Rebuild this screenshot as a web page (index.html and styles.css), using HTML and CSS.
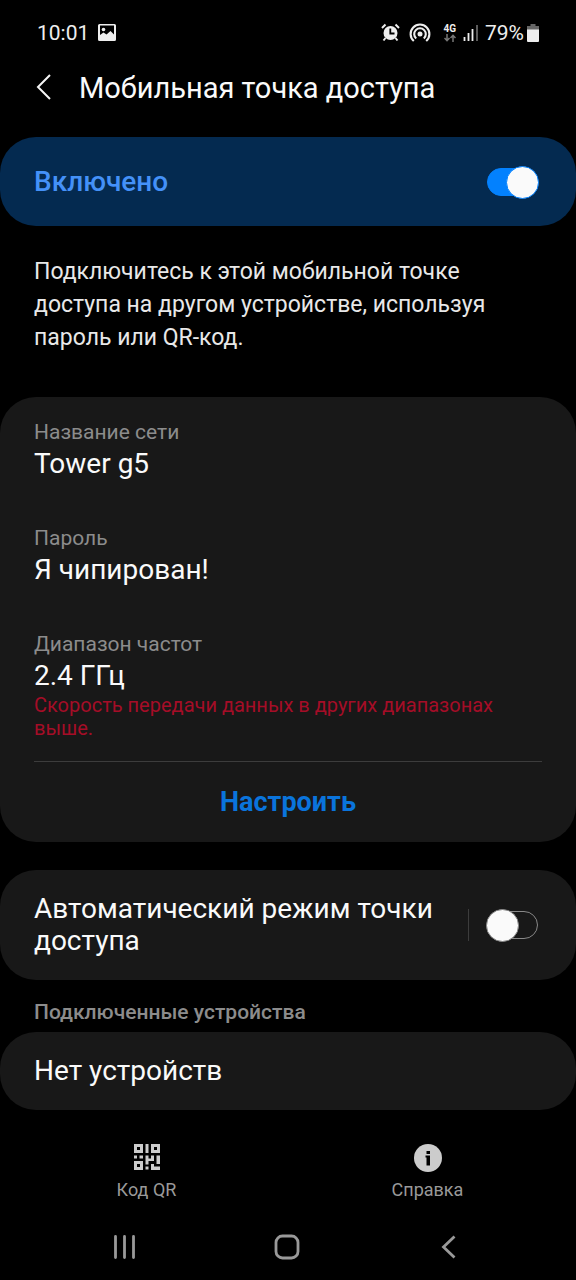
FILE: index.html
```html
<!DOCTYPE html>
<html lang="ru">
<head>
<meta charset="utf-8">
<meta name="viewport" content="width=device-width, initial-scale=1">
<title>Мобильная точка доступа</title>
<link rel="stylesheet" href="styles.css">
</head>
<body>
<div class="screen">
  <div class="status">
    <div class="status-group">
      <span class="clock">10:01</span>
      <svg class="photo" width="18" height="18" viewBox="0 0 18 18" aria-hidden="true"><path fill="#eee" fill-rule="evenodd" d="M1.500 0h15A1.500 1.500 0 0 1 18 1.500v14a1.500 1.500 0 0 1-1.500 1.500h-15A1.500 1.500 0 0 1 0 15.500v-14A1.500 1.500 0 0 1 1.500 0zM2 1.500V11l3.500-2.500 3 2L12.500 7l3.500 3.500v-9z"/><circle cx="5.500" cy="5.500" r="1.800" fill="#eee"/></svg>
    </div>
    <div class="status-group">
      <svg class="alarm" width="19" height="19" viewBox="0 0 19 19" aria-hidden="true"><circle cx="9.500" cy="10" r="7" fill="#eee"/><path d="M1 5l3.500-3.500M18 5l-3.500-3.500M4.500 15l-2 2.500M14.500 15l2 2.500" stroke="#eee" stroke-width="2"/><path d="M9.300 5.500V10.500H13.500" fill="none" stroke="#000" stroke-width="1.800"/></svg>
      <svg class="hotspot" width="22" height="20" viewBox="0 0 22 20" aria-hidden="true"><circle cx="11" cy="11" r="2.500" fill="#eee"/><path d="M7.200 15.500a5.800 5.800 0 1 1 7.600 0M4.800 18a9.400 9.400 0 1 1 12.400 0" fill="none" stroke="#eee" stroke-width="2.100"/></svg>
      <span class="network"><span>4G</span><svg width="12" height="8" viewBox="0 0 12 8" aria-hidden="true"><path d="M3 0v6M.5 4L3 6.700 5.500 4M9 8V2M6.500 4L9 1.300 11.500 4" fill="none" stroke="#777" stroke-width="1.500"/></svg></span>
      <svg class="signal" width="16" height="17" viewBox="0 0 16 17" aria-hidden="true"><path d="M1.500 13v4M5.500 9v8M9.500 5v12" stroke="#eee" stroke-width="1.800"/><path d="M14 1v16" stroke="#666" stroke-width="1.800"/></svg>
      <span class="percent">79%</span>
      <svg width="12" height="18" viewBox="0 0 12 18" aria-hidden="true"><path d="M3.500 0h5v2H12v4H0V2h3.500z" fill="#666"/><path d="M0 5.500h12V17a1 1 0 0 1-1 1H1a1 1 0 0 1-1-1z" fill="#eee"/></svg>
    </div>
  </div>

  <header class="header">
    <button class="icon-button back" aria-label="Назад"><svg width="16" height="28" viewBox="0 0 16 28"><path d="M14 1L2 13l12 12" fill="none" stroke="#f5f5f5" stroke-width="2"/></svg></button>
    <h1>Мобильная точка доступа</h1>
  </header>

  <main>
    <div class="card master">
      <label for="hotspot">Включено</label>
      <input class="switch" id="hotspot" type="checkbox" role="switch" checked>
    </div>
    <p class="intro">Подключитесь к этой мобильной точке доступа на другом устройстве, используя пароль или QR-код.</p>

    <section class="card details">
      <dl>
        <div><dt>Название сети</dt><dd>Tower g5</dd></div>
        <div><dt>Пароль</dt><dd>Я чипирован!</dd></div>
        <div><dt>Диапазон частот</dt><dd>2.4 ГГц</dd></div>
      </dl>
      <p class="warning">Скорость передачи данных в других диапазонах выше.</p>
      <button class="configure">Настроить</button>
    </section>

    <div class="card auto">
      <label for="auto">Автоматический режим точки доступа</label>
      <span class="auto-switch"><input class="switch" id="auto" type="checkbox" role="switch"></span>
    </div>

    <h2>Подключенные устройства</h2>
    <div class="card devices">Нет устройств</div>
  </main>

  <div class="actions">
    <button><svg width="26" height="26" viewBox="0 0 26 26" aria-hidden="true"><path fill="#ccc" fill-rule="evenodd" d="M0 0h9v9H0zM3 3v3h3V3zM17 0h9v9h-9zM20 3v3h3V3zM0 17h9v9H0zM3 20v3h3v-3zM11.500 0h3v9h-3zM0 11.500h3v3H0zM5.500 11.500h3.500v3H5.500zM11.500 11.500h3v3h2.500v-3h3v5.500h-5.500v3.500h-3zM22.500 11.500h3.500v8.500h-3.500zM11.500 22.500h3v3h-3zM17 20h3v2.500h6v3.500h-9z"/></svg><span>Код QR</span></button>
    <button><svg width="28" height="28" viewBox="0 0 28 28" aria-hidden="true"><circle cx="14" cy="14" r="14" fill="#ccc"/><path d="M12.500 7h3.500v3h-3.500zM11.500 11.500h4.500v10h-3.500v-8h-1z" fill="#000"/></svg><span>Справка</span></button>
  </div>

  <nav class="navigation">
    <button class="icon-button" aria-label="Недавние"><svg width="24" height="24" viewBox="0 0 24 24"><path d="M2.500 1.500v21M11.500 1.500v21M20.500 1.500v21" stroke="#999" stroke-width="2.800" stroke-linecap="round"/></svg></button>
    <button class="icon-button" aria-label="Главный экран"><svg width="26" height="26" viewBox="0 0 26 26"><rect x="2" y="2" width="22" height="22" rx="6.500" fill="none" stroke="#999" stroke-width="2.800"/></svg></button>
    <button class="icon-button" aria-label="Назад"><svg width="16" height="24" viewBox="0 0 16 24"><path d="M13.500 1.500L2.500 12l11 10.500" fill="none" stroke="#999" stroke-width="2.800"/></svg></button>
  </nav>
</div>
</body>
</html>
```
FILE: styles.css
```css
* { box-sizing: border-box; }
body { margin: 0; background: #000; color: #fafafa; font-family: Roboto, "Noto Sans", sans-serif; }
h1, h2, p, dl, dd { margin: 0; }
svg { display: block; flex: none; }
button { border: 0; padding: 0; background: none; color: inherit; font: inherit; cursor: pointer; }
.screen { display: flex; flex-direction: column; min-height: 100vh; }

.status { display: flex; justify-content: space-between; align-items: center; height: 65px; padding: 0 37px; color: #eee; font-size: 21px; line-height: 24px; }
.status-group { display: flex; align-items: center; }
.photo { margin-left: 9px; }
.hotspot { margin-left: 9px; }
.network { display: flex; flex-direction: column; align-items: center; gap: 1px; margin: 0 7px 0 12px; font-size: 10px; font-weight: 700; line-height: 9px; }
.percent { margin: 0 3px 0 6px; }

.header { display: flex; align-items: center; height: 72px; padding: 0 36px 26px; }
.icon-button { display: flex; align-items: center; justify-content: center; }
.back { margin-right: 27px; }
h1 { font-size: 29px; font-weight: 400; line-height: 46px; }

.card { border-radius: 36px; background: #181818; font-size: 28px; line-height: 32px; }
.master { display: flex; align-items: center; justify-content: space-between; padding: 29px 37px 28px 34px; background: #042a50; color: #4491f8; font-weight: 500; }
.intro { padding: 29px 72px 43px 34px; color: #e8e8e8; font-size: 23px; line-height: 33px; }

.switch { position: relative; width: 53px; height: 32px; margin: 0; appearance: none; flex: none; cursor: pointer; }
.switch::before { content: ""; position: absolute; inset: 2px 1px; border: 1px solid #888; border-radius: 14px; }
.switch::after { content: ""; position: absolute; top: 0; left: 0; width: 31px; height: 31px; border: 1px solid #888; border-radius: 50%; background: #fafafa; }
.switch:checked::before { border-color: #0381fe; background: #0381fe; }
.switch:checked::after { left: auto; right: 0; border-color: #0381fe; }

.details { padding: 21px 34px 0; }
.details dl { display: grid; gap: 42px; }
dt { color: #8c8c8c; font-size: 21px; line-height: 28px; }
dd { line-height: 36px; }
.warning { padding-bottom: 21px; border-bottom: 1px solid #3c3c3c; color: #a50d27; font-size: 20px; line-height: 23px; }
.configure { display: block; width: 100%; height: 80px; color: #0a74dc; font-size: 27px; font-weight: 700; }

.auto { display: flex; align-items: center; justify-content: space-between; margin-top: 28px; padding: 23px 37px 23px 34px; }
.auto-switch { display: flex; padding-left: 17px; border-left: 1px solid #3c3c3c; }
h2 { padding: 19px 34px 7px; color: #8c8c8c; font-size: 21px; font-weight: 500; line-height: 26px; }
.devices { padding: 23px 34px; }

.actions { display: grid; grid-template-columns: 1fr 1fr; padding: 34px 8px 0 6px; color: #999; font-size: 18px; line-height: 22px; }
.actions button { display: flex; flex-direction: column; align-items: center; justify-content: space-between; height: 57px; }
.navigation { display: grid; grid-template-columns: 1fr 1fr 1fr; padding: 33px 46px 0 44px; }
.navigation .icon-button { height: 26px; }
```
